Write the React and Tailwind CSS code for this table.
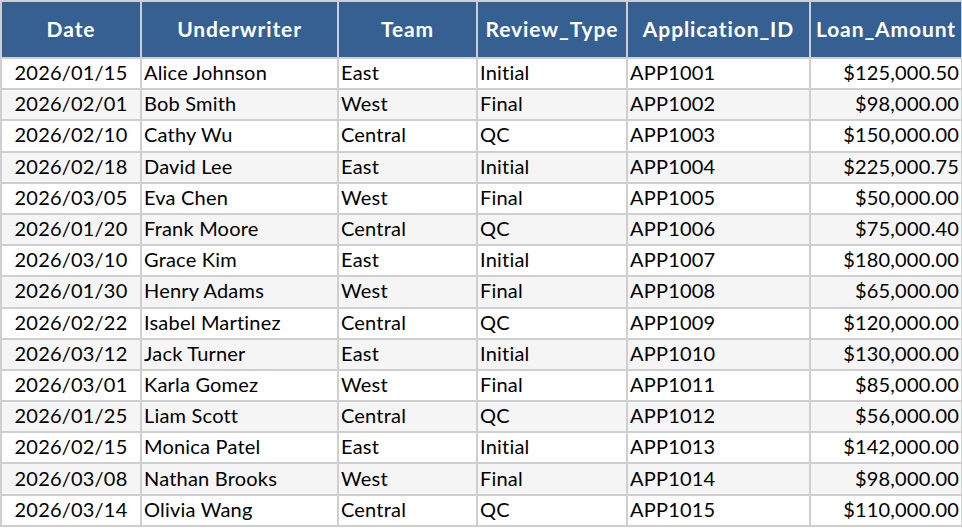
import React from "react";

const rows = [
  ["2026/01/15", "Alice Johnson", "East", "Initial", "APP1001", "$125,000.50"],
  ["2026/02/01", "Bob Smith", "West", "Final", "APP1002", "$98,000.00"],
  ["2026/02/10", "Cathy Wu", "Central", "QC", "APP1003", "$150,000.00"],
  ["2026/02/18", "David Lee", "East", "Initial", "APP1004", "$225,000.75"],
  ["2026/03/05", "Eva Chen", "West", "Final", "APP1005", "$50,000.00"],
  ["2026/01/20", "Frank Moore", "Central", "QC", "APP1006", "$75,000.40"],
  ["2026/03/10", "Grace Kim", "East", "Initial", "APP1007", "$180,000.00"],
  ["2026/01/30", "Henry Adams", "West", "Final", "APP1008", "$65,000.00"],
  ["2026/02/22", "Isabel Martinez", "Central", "QC", "APP1009", "$120,000.00"],
  ["2026/03/12", "Jack Turner", "East", "Initial", "APP1010", "$130,000.00"],
  ["2026/03/01", "Karla Gomez", "West", "Final", "APP1011", "$85,000.00"],
  ["2026/01/25", "Liam Scott", "Central", "QC", "APP1012", "$56,000.00"],
  ["2026/02/15", "Monica Patel", "East", "Initial", "APP1013", "$142,000.00"],
  ["2026/03/08", "Nathan Brooks", "West", "Final", "APP1014", "$98,000.00"],
  ["2026/03/14", "Olivia Wang", "Central", "QC", "APP1015", "$110,000.00"],
];

const headers = ["Date", "Underwriter", "Team", "Review_Type", "Application_ID", "Loan_Amount"];

export default function App() {
  return (
    <div className="w-[962px] h-[528px] bg-white font-['Lato',sans-serif] text-black">
      <table className="w-[961px] table-fixed border-collapse">
        <colgroup>
          <col className="w-[140px]" />
          <col className="w-[197px]" />
          <col className="w-[139px]" />
          <col className="w-[150px]" />
          <col className="w-[183px]" />
          <col className="w-[152px]" />
        </colgroup>
        <thead>
          <tr className="h-[57px] bg-[#366092]">
            {headers.map((h) => (
              <th
                key={h}
                className="border-2 border-[#cfcfcf] px-0 pb-[2px] text-center text-[21px] tracking-[0.9px] font-bold text-white whitespace-nowrap overflow-visible"
              >
                {h}
              </th>
            ))}
          </tr>
        </thead>
        <tbody>
          {rows.map((r, i) => (
            <tr key={r[4]} className={i % 2 ? "h-[31.2px] bg-[#f5f5f5]" : "h-[31.2px] bg-white"}>
              {r.map((c, j) => (
                <td
                  key={j}
                  className={
                    "border-2 border-[#cfcfcf] px-0.5 pt-0 pb-[3px] text-[20px] tracking-[0.2px] leading-none whitespace-nowrap " +
                    (j === 0 ? "text-center" : j === 5 ? "text-right" : "text-left")
                  }
                >
                  {c}
                </td>
              ))}
            </tr>
          ))}
        </tbody>
      </table>
    </div>
  );
}
